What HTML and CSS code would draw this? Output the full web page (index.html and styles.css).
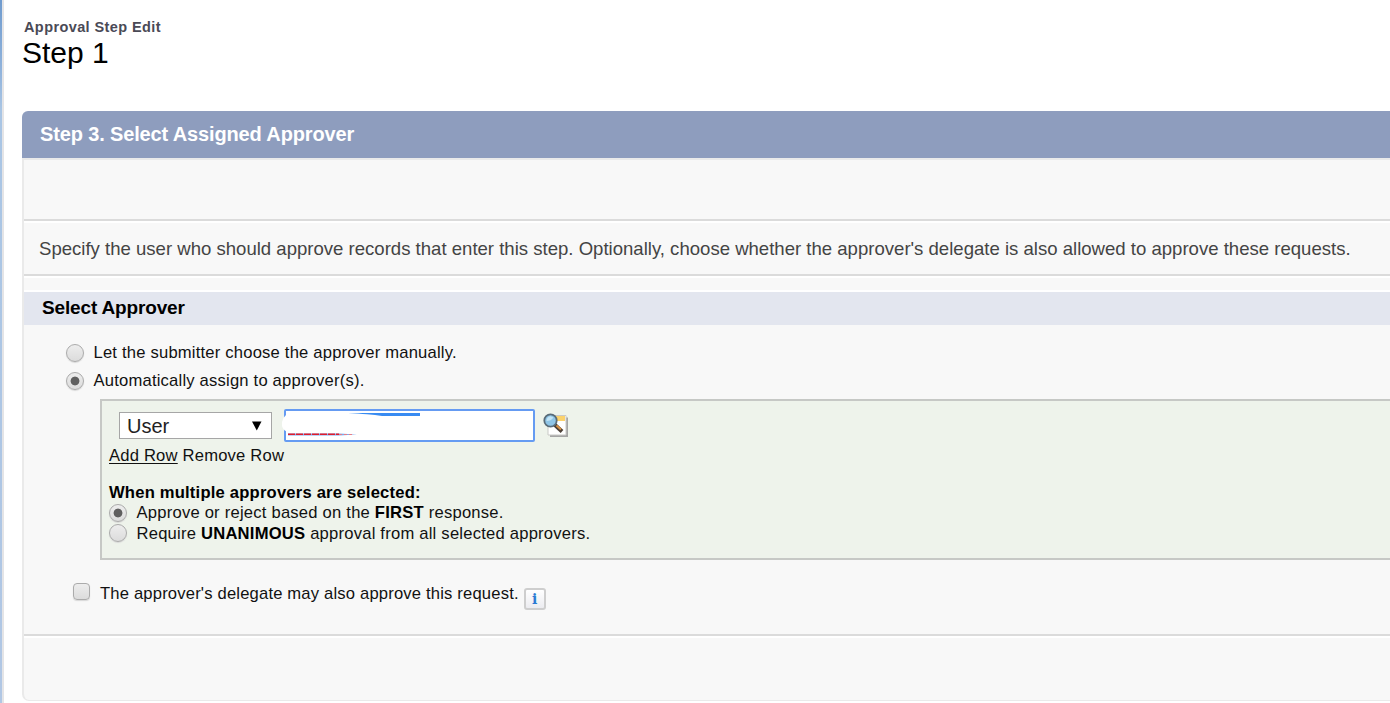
FILE: index.html
```html
<!DOCTYPE html>
<html lang="en">
<head>
<meta charset="utf-8">
<title>Approval Step Edit</title>
<link rel="stylesheet" href="styles.css">
</head>
<body>
<main class="page">
  <header class="page-title">
    <div class="page-type">Approval Step Edit</div>
    <h1 class="page-name">Step 1</h1>
  </header>
  <section class="wizard">
    <h2 class="wizard-head">Step 3. Select Assigned Approver</h2>
    <div class="wizard-body">
      <div class="buttons-bar"></div>
      <p class="description"><span class="description-text">Specify the user who should approve records that enter this step. Optionally, choose whether the approver's delegate is also allowed to approve these requests.</span></p>
      <h3 class="section-head">Select Approver</h3>
      <div class="form">
        <label class="option"><input class="radio" type="radio" name="assign"><span class="manual">Let the submitter choose the approver manually.</span></label>
        <label class="option option-auto"><input class="radio" type="radio" name="assign" checked><span>Automatically assign to approver(s).</span></label>
        <div class="approvers">
          <div class="lookup-row">
            <div class="select"><span>User</span><svg width="10" height="10" viewBox="0 0 10 10"><path d="M0 0.5H9.5L4.75 9.5Z"/></svg></div>
            <div class="field">
              <svg class="redaction" width="160" height="34" viewBox="0 0 160 34">
                <path d="M8 4Q0 8 1 17Q2 22 9 24V4Z" fill="#fff"/>
                <path d="M67 4.5Q76 3.8 87 4H139V7H101Q88 4.8 67 4.5Z" fill="#388bf2"/>
                <path d="M7 24.6H58L76 25.6L58 26.4H7Z" fill="#7aa9ed"/>
                <path d="M7 25.3H58" stroke="#e01c2b" stroke-width="1.6" stroke-dasharray="7 1"/>
                <path d="M58 25.5H71" stroke="#e77e88" stroke-dasharray="3 2"/>
              </svg>
            </div>
            <svg class="lookup-icon" width="26" height="26" viewBox="0 0 26 26">
              <path d="M7 4.5H25V24H7Z" fill="#a5a5a5"/>
              <path d="M5 2.5H23V22H5Z" fill="#fff" stroke="#c9c9c6"/>
              <path d="M12 3H22V8H12Z" fill="#fbd26c"/>
              <path d="M12 12L19 18.5" stroke="#4b4038" stroke-width="4"/>
              <path d="M13.5 12.5L18 16.5" stroke="#d89143" stroke-width="2"/>
              <circle cx="7.5" cy="7.5" r="6.2" fill="#8fc5e7" stroke="#596b78" stroke-width="1.8"/>
              <path d="M3.5 8Q3.5 4 7.5 3.3L10.5 4.5Q8 8 3.5 8Z" fill="#c3e4f5"/>
            </svg>
          </div>
          <div class="row-links"><a class="add-row">Add Row</a> <span>Remove Row</span></div>
          <div class="multi-title">When multiple approvers are selected:</div>
          <label class="option choice"><input class="radio" type="radio" name="multi" checked><span>Approve or reject based on the <b>FIRST</b> response.</span></label>
          <label class="option choice"><input class="radio" type="radio" name="multi"><span>Require <b>UNANIMOUS</b> approval from all selected approvers.</span></label>
        </div>
        <div class="delegate"><input class="checkbox" type="checkbox"><span>The approver's delegate may also approve this request.</span><span class="info">i</span></div>
      </div>
      <div class="bottom-bar"></div>
    </div>
  </section>
</main>
</body>
</html>
```
FILE: styles.css
```css
* { box-sizing: border-box; }
body {
  margin: 0;
  height: 703px;
  overflow: hidden;
  display: flex;
  background: #fff;
  color: #111;
  font: 16.6px/20px "Liberation Sans", Arial, sans-serif;
  letter-spacing: .2px;
}
body::before {
  content: "";
  flex: none;
  width: 4px;
  background: linear-gradient(90deg, transparent 50%, #e4e4e6 50%), linear-gradient(#6f9bce, #90b3dc 70px, #a9c5e4 110px, #b1c7e4);
}
.page { flex: 1; min-width: 0; padding: 17px 0 0 18px; }
.page-title { height: 94px; }
.page-type { padding-left: 2px; font-size: 14.5px; font-weight: bold; letter-spacing: .4px; color: #4a4a56; }
.page-name { margin: -1px 0 0; font-size: 30px; line-height: 34px; font-weight: normal; letter-spacing: 0; color: #000; }
.wizard-head {
  margin: 0;
  height: 47px;
  padding-left: 18px;
  border-radius: 6px 0 0 0;
  background: #8e9dbe;
  color: #fff;
  font-size: 20px;
  line-height: 46px;
  letter-spacing: -.14px;
}
.wizard-body {
  height: 543px;
  border: solid #eaeaea;
  border-width: 2px 0 1px 2px;
  border-radius: 0 0 0 7px;
  background: #f8f8f8;
}
.buttons-bar { height: 63px; border-bottom: 2px solid #fff; box-shadow: inset 0 -2px #dbdbdb; }
.description {
  margin: 0;
  height: 55px;
  padding-left: 15px;
  border-bottom: 2px solid #fff;
  box-shadow: inset 0 -2px #dbdbdb;
  color: #444;
  font-size: 18.57px;
  line-height: 51px;
  letter-spacing: 0;
  white-space: nowrap;
}
.section-head {
  margin: 12px 0 0;
  height: 35px;
  padding-left: 18px;
  border-top: 2px solid #fff;
  background: #e3e6ef;
  color: #000;
  font-size: 19px;
  line-height: 31px;
  letter-spacing: -.15px;
}
.form { height: 313px; padding: 17px 0 0 42px; border-bottom: 2px solid #fff; box-shadow: inset 0 -2px #dbdbdb; }
.option { display: flex; height: 28px; align-items: flex-start; gap: 9.5px; white-space: nowrap; }
.option span, .delegate span { padding-top: 1px; }
.radio, .checkbox {
  appearance: none;
  flex: none;
  width: 18px;
  height: 18px;
  margin: 2px 0 0;
  border: 1px solid #ababab;
  border-radius: 50%;
  background: linear-gradient(#ededed, #dcdcdc);
  box-shadow: 0 1px 1px #d8d8d8;
}
.radio:checked { background: radial-gradient(circle, #5f5f5f 4px, transparent 4.8px), linear-gradient(#ededed, #dcdcdc); }
.option-auto { height: 29px; }
.approvers {
  height: 161px;
  margin-left: 34px;
  padding: 9px 0 0 7px;
  border: 2px solid #c6c8c5;
  border-right: 0;
  background: #eef3eb;
}
.lookup-row { display: flex; align-items: flex-start; height: 36px; padding-left: 10px; }
.select {
  display: flex;
  align-items: center;
  justify-content: space-between;
  width: 153px;
  height: 27px;
  margin-top: 2px;
  padding: 0 9px 0 7px;
  border: 1px solid #a6a6a6;
  background: #fff;
  color: #222;
  font-size: 20px;
  letter-spacing: 0;
}
.select svg { fill: #000; }
.field { position: relative; width: 251px; height: 33px; margin: -1px 0 0 12px; border: 2px solid #659bf2; border-radius: 2px; background: #fff; }
.redaction { position: absolute; left: -5px; top: -2px; }
.lookup-icon { margin: 3px 0 0 8px; }
.row-links { height: 20px; white-space: nowrap; }
.add-row { text-decoration: underline; text-underline-offset: 2px; }
.multi-title { margin-top: 17px; color: #000; font-weight: bold; }
.choice { height: 21px; }
.choice .radio { margin-top: 1px; }
.choice + .choice .radio { margin-top: 0; }
.choice span { padding-top: 0; letter-spacing: .22px; }
.choice b { color: #000; }
.delegate { display: flex; align-items: flex-start; padding: 23px 0 0 7px; letter-spacing: .18px; }
.checkbox { width: 17px; height: 17px; margin: 0 10px 0 0; border-radius: 4px; }
.delegate .info {
  width: 22px;
  height: 22px;
  margin: 5px 0 0 5px;
  padding: 0;
  border: 2px solid #cecece;
  border-radius: 3px;
  background: linear-gradient(#fff, #ececf0);
  color: #2b7bd3;
  font: bold 14px/19px "DejaVu Serif", serif;
  text-align: center;
  letter-spacing: 0;
}
```
